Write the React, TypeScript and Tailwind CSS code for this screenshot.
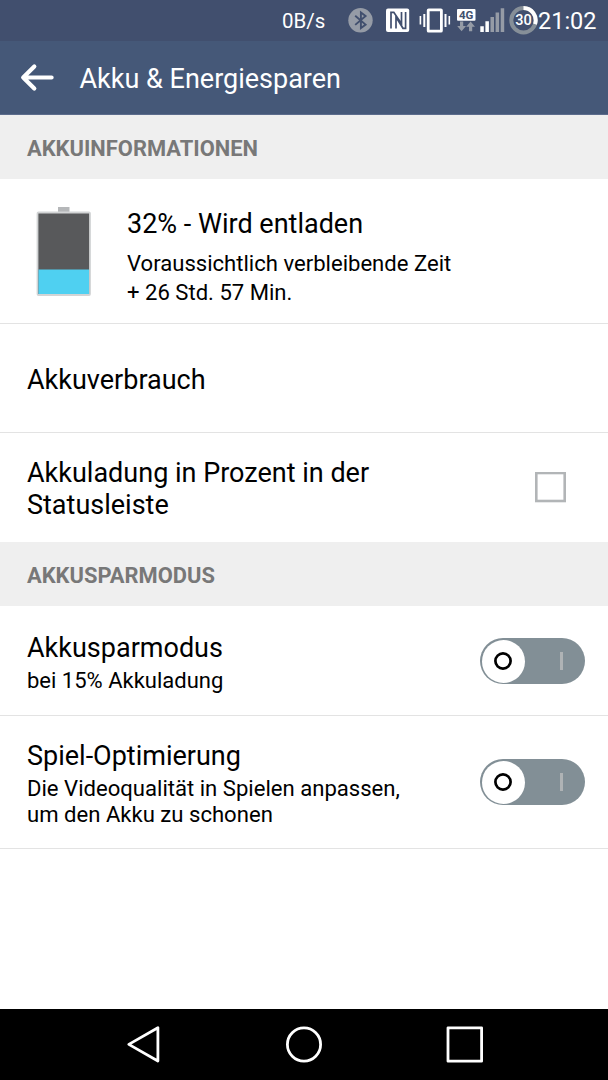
import type { ReactNode } from "react";

function BluetoothIcon() {
  return (
    <svg className="ml-[23px] h-10 w-[25px] shrink-0" viewBox="348 0 25 40" fill="none">
      <circle cx="360.5" cy="20.3" r="12.2" fill="#959ba6" />
      <path d="M355.2 15.7L365.6 24.6L360.9 28.2V12.4L365.6 16L355.2 24.9" stroke="#414f6e" strokeWidth="1.9" />
    </svg>
  );
}

function NfcIcon() {
  return (
    <svg className="ml-[13px] h-10 w-6 shrink-0" viewBox="386 0 24 40" fill="none">
      <rect x="386" y="8.6" width="23.2" height="23.4" rx="2" fill="#fff" />
      <path d="M391 28.5V12.3H393.8L401.5 23.8V12M396 28.5V17L403 28.3H405.6V12" stroke="#414f6e" strokeWidth="1.7" />
    </svg>
  );
}

function VibrateIcon() {
  return (
    <svg className="ml-[9px] h-10 w-8 shrink-0" viewBox="419 0 32 40" fill="none" stroke="#fff">
      <rect x="428.2" y="9.8" width="13.2" height="21.4" rx="0.5" strokeWidth="2.8" />
      <path d="M420.4 16V24.5M449.3 16V24.5" strokeWidth="1.6" />
      <path d="M424.3 14V27M445.5 14V27" strokeWidth="2" />
    </svg>
  );
}

function NetworkIcon() {
  return (
    <svg className="ml-[5px] h-10 w-5 shrink-0" viewBox="456 0 20 40">
      <rect x="457" y="9" width="18.5" height="11.8" rx="1" fill="#fff" />
      <text x="466.2" y="18.9" textAnchor="middle" fill="#414f6e" fontFamily="Roboto, sans-serif" fontWeight="700" fontSize="11.5">4G</text>
      <path d="M460 21.5H463.2V26H466L461.6 31.2L457.2 26H460ZM469 31.2H472.2V26.7H475L470.6 21.5L466.2 26.7H469Z" fill="#959ba6" />
    </svg>
  );
}

function SignalIcon() {
  return (
    <svg className="ml-1 h-10 w-[25px] shrink-0" viewBox="480 0 25 40">
      <path d="M480.3 26.2H483.8V32H480.3ZM485.4 21.3H488.9V32H485.4Z" fill="#fff" />
      <path d="M490.5 17H494V32H490.5ZM495.6 12.5H499.1V32H495.6ZM500.7 8.3H504.2V32H500.7Z" fill="#959ba6" />
    </svg>
  );
}

function BatteryRing() {
  return (
    <svg className="ml-1 h-10 w-[29px] shrink-0" viewBox="509 0 29 40" fill="none">
      <circle cx="523.5" cy="20.3" r="12.2" stroke="#868f98" strokeWidth="4" />
      <path d="M523.5 8.1A12.2 12.2 0 0 1 535 24.2" stroke="#fff" strokeWidth="4" />
      <text x="523.6" y="25" textAnchor="middle" fill="#fff" fontFamily="Roboto, sans-serif" fontWeight="500" fontSize="14.5">30</text>
    </svg>
  );
}

function SectionHeader({ children }: { children: ReactNode }) {
  return (
    <h2 className="flex h-16 items-center bg-[#efefef] px-[27px] pt-[3px] text-[21.9px] font-bold leading-none text-[#787878]">
      {children}
    </h2>
  );
}

function Switch() {
  return (
    <button role="switch" aria-checked="false" className="flex h-[46px] w-[105px] shrink-0 items-center justify-between rounded-full bg-[#828f96] pl-[1.5px] pr-[22px]">
      <span className="flex size-[43px] items-center justify-center rounded-full bg-white">
        <svg className="size-[18px]" viewBox="0 0 18 18" fill="none" stroke="#000" strokeWidth="2.7">
          <circle cx="9" cy="9" r="7.6" />
        </svg>
      </span>
      <span className="h-[18px] w-[3px] bg-[#afb3b5]" />
    </button>
  );
}

export default function App() {
  return (
    <div className="flex h-[1080px] w-[608px] flex-col overflow-hidden bg-white font-['Roboto',sans-serif] text-black">
      <div className="flex h-[41px] shrink-0 items-start bg-[#414f6e] pl-[282px] text-white">
        <span className="w-[43px] shrink-0 whitespace-nowrap text-[20.5px] leading-[42px]">0B/s</span>
        <BluetoothIcon />
        <NfcIcon />
        <VibrateIcon />
        <NetworkIcon />
        <SignalIcon />
        <BatteryRing />
        <span className="text-[23.5px] leading-[43px]">21:02</span>
      </div>
      <header className="flex h-[74px] shrink-0 items-center border-b border-[#5c6c8c] bg-[#455878] pl-5 text-white">
        <svg className="h-8 w-9" viewBox="20 62 36 32" fill="none" stroke="#fff" strokeWidth="4.2" strokeLinecap="round" strokeLinejoin="round">
          <path d="M34.3 66.5L23.2 77.5L34.3 88.5M23.2 77.5H51.6" />
        </svg>
        <h1 className="ml-[23.5px] pt-[2px] text-[27px] leading-8">Akku &amp; Energiesparen</h1>
      </header>
      <main className="grow">
        <SectionHeader>AKKUINFORMATIONEN</SectionHeader>
        <section className="flex h-[145px] border-b border-[#e3e3e3] pl-9 pt-7">
          <svg className="h-[90px] w-14" viewBox="36 207 56 90">
            <rect x="58" y="207" width="11.5" height="6" fill="#b5b7b9" />
            <rect x="37.5" y="212.5" width="52.5" height="82.5" rx="1" fill="#58595b" stroke="#d2d4d5" strokeWidth="1.8" />
            <rect x="38.5" y="269.5" width="50.5" height="24.5" fill="#4fd0f1" />
          </svg>
          <div className="ml-[35px] pt-px">
            <p className="text-[27px] leading-8">32% - Wird entladen</p>
            <p className="mt-[9px] text-[22.08px] leading-[29px]">Voraussichtlich verbleibende Zeit<br />+ 26 Std. 57 Min.</p>
          </div>
        </section>
        <section className="flex h-[109px] items-center border-b border-[#e3e3e3] px-[27px] pt-[3px]">
          <p className="text-[27px] leading-8">Akkuverbrauch</p>
        </section>
        <section className="flex h-[109px] items-center justify-between pl-[27px] pr-[42px]">
          <p className="pt-[2px] text-[27px] leading-8">Akkuladung in Prozent in der<br />Statusleiste</p>
          <svg role="checkbox" aria-checked="false" className="size-[31px]" viewBox="0 0 31 31" fill="none">
            <rect x="1.3" y="1" width="28.4" height="28" stroke="#b2b5b7" strokeWidth="2.6" />
          </svg>
        </section>
        <SectionHeader>AKKUSPARMODUS</SectionHeader>
        <section className="flex h-[110px] items-center justify-between border-b border-[#e3e3e3] pl-[27px] pr-[23px] pt-px">
          <div className="pt-1">
            <p className="text-[27px] leading-8">Akkusparmodus</p>
            <p className="mt-1 text-[22px] leading-[26px]">bei 15% Akkuladung</p>
          </div>
          <Switch />
        </section>
        <section className="flex h-[133px] items-center justify-between border-b border-[#e3e3e3] pl-[27px] pr-[23px]">
          <div className="pt-[2px]">
            <p className="text-[27px] leading-8">Spiel-Optimierung</p>
            <p className="mt-[3px] text-[22.1px] leading-[26px]">Die Videoqualität in Spielen anpassen,<br />um den Akku zu schonen</p>
          </div>
          <Switch />
        </section>
      </main>
      <nav className="flex h-[71px] shrink-0 items-center bg-black pl-[126px]">
        <svg className="h-10 w-[35px]" viewBox="126 1025 35 40" fill="none" stroke="#fff" strokeWidth="2.8" strokeLinejoin="round">
          <path d="M157.9 1027.8V1061L128.8 1044.4Z" />
        </svg>
        <svg className="ml-[125px] h-10 w-9" viewBox="286 1025 36 40" fill="none" stroke="#fff" strokeWidth="2.8">
          <circle cx="304" cy="1044.5" r="16.6" />
        </svg>
        <svg className="ml-[124px] h-10 w-[38px]" viewBox="446 1025 38 40" fill="none" stroke="#fff" strokeWidth="2.8" strokeLinejoin="round">
          <rect x="448" y="1027.8" width="33.6" height="33.4" />
        </svg>
      </nav>
    </div>
  );
}
